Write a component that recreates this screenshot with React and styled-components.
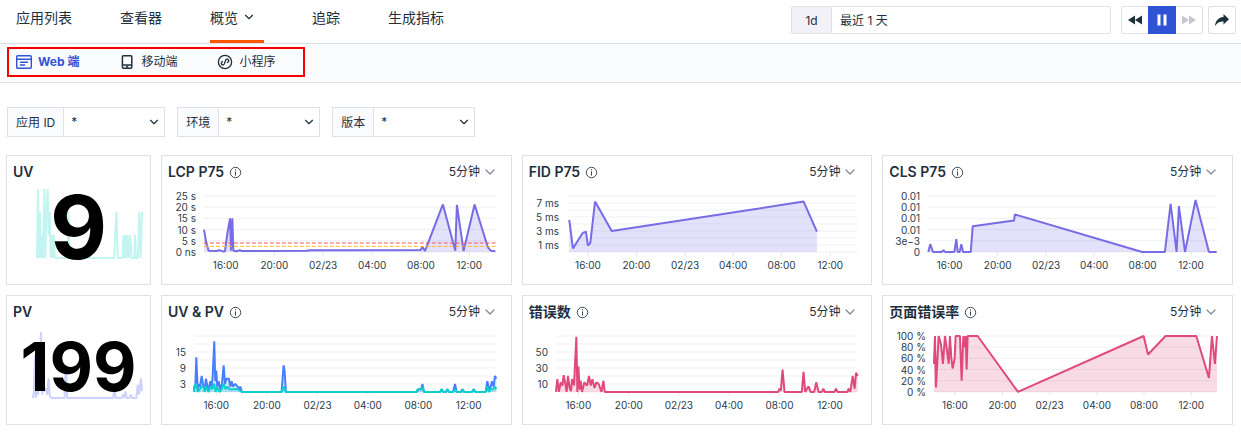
import React from 'react';
import styled, { createGlobalStyle } from 'styled-components';
import { ChevronDown } from 'lucide-react';

const GlobalStyle = createGlobalStyle`
  * {
    box-sizing: border-box;
  }
  body {
    margin: 0;
    background: #fff;
    color: #1f303d;
    font-family: Inter, 'Noto Sans CJK SC', sans-serif;
    font-size: 12px;
  }
  button, input, select {
    font: inherit;
    color: inherit;
  }
`;

const Header = styled.header`
  display: flex;
  justify-content: space-between;
  height: 44px;
  padding: 0 5px 0 16px;
  border-bottom: 1px solid #dfe1e8;
`;

const Nav = styled.nav`
  display: flex;
  gap: 48px;
`;

const NavLink = styled.a`
  display: flex;
  align-items: center;
  gap: 4px;
  padding: 0 ${({ $active }) => ($active ? '8px' : '0')} 6px 0;
  border-bottom: 3px solid ${({ $active }) => ($active ? '#ff5500' : 'transparent')};
  color: inherit;
  font-size: 14px;
  text-decoration: none;
  white-space: nowrap;
`;

const Toolbar = styled.div`
  display: flex;
  padding-top: 6px;
`;

const TimeRange = styled.div`
  display: flex;
  width: 320px;
  height: 28px;
  margin-right: 10px;
  border: 1px solid #dfe1e8;
  border-radius: 2px;
`;

const RangeLabel = styled.label`
  display: flex;
  align-items: center;
  justify-content: center;
  width: 40px;
  background: #f2f1f8;
  border-right: 1px solid #dfe1e8;
`;

const RangeInput = styled.input`
  flex: 1;
  min-width: 0;
  padding: 0 8px 2px;
  border: 0;
  background: none;
`;

const ButtonGroup = styled.div`
  display: flex;
  height: 28px;
  margin-right: 5px;
  border: 1px solid #dfe1e8;
  border-radius: 2px;
`;

const IconButton = styled.button`
  display: flex;
  align-items: center;
  justify-content: center;
  width: ${({ $primary }) => ($primary ? '28px' : '26px')};
  height: ${({ $primary }) => ($primary ? '28px' : '26px')};
  margin: ${({ $primary }) => ($primary ? '-1px 0' : '0')};
  padding: 0;
  border: 0;
  background: ${({ $primary }) => ($primary ? '#3053d5' : 'none')};
  color: ${({ $primary, disabled }) => ($primary ? '#fff' : disabled ? '#c5c7d1' : '#1f303d')};
`;

const ShareButton = styled(IconButton)`
  width: 28px;
  height: 28px;
  border: 1px solid #dfe1e8;
  border-radius: 2px;
`;

const SubHeader = styled.div`
  display: flex;
  height: 39px;
  padding: 3px 7px 5px;
  background: #fafbfd;
  border-bottom: 1px solid #dfe1e8;
`;

const Platforms = styled.nav`
  display: flex;
  align-items: center;
  gap: 40px;
  padding: 0 28px 0 7px;
  border: 2px solid #f80000;
`;

const PlatformLink = styled.a`
  display: flex;
  align-items: center;
  gap: 6px;
  color: ${({ $active }) => ($active ? '#3053d5' : 'inherit')};
  font-weight: ${({ $active }) => ($active ? 700 : 400)};
  line-height: 18px;
  text-decoration: none;
  white-space: nowrap;
`;

const Filters = styled.form`
  display: flex;
  flex-wrap: wrap;
  gap: 12px;
  padding: 24px 7px 18px;
`;

const Filter = styled.label`
  display: flex;
  height: 30px;
  border: 1px solid #dfe1e8;
`;

const FilterName = styled.span`
  display: flex;
  align-items: center;
  padding: 0 8px 2px;
  background: #fafbfd;
  border-right: 1px solid #dfe1e8;
`;

/* The native arrow is hidden and the chevron shares the select's grid cell */
const SelectBox = styled.span`
  display: grid;
  align-items: center;
  width: ${({ $width }) => $width};

  > * {
    grid-area: 1 / 1;
  }
  > svg {
    justify-self: end;
    margin-right: ${({ $inset }) => $inset};
    pointer-events: none;
  }
`;

const Select = styled.select`
  width: 100%;
  height: 28px;
  padding: 0 0 1px ${({ $indent }) => $indent || '0'};
  border: 0;
  background: none;
  appearance: none;
`;

const Board = styled.main`
  display: grid;
  grid-template-columns: 145px repeat(3, minmax(0, 1fr));
  gap: 10px;
  padding: 0 8px 8px 6px;
`;

const Card = styled.section`
  min-height: 130px;
  border: 1px solid #dfe1e8;
`;

const CardHeader = styled.div`
  display: flex;
  align-items: center;
  height: 32px;
  padding: 0 12px 0 6px;

  > svg {
    margin-left: 5px;
  }
  > span {
    margin-left: auto;
  }
`;

const CardTitle = styled.h2`
  margin: 0;
  font-size: 14px;
  font-weight: 600;
  line-height: 20px;
`;

const Plot = styled.svg`
  display: block;
  width: 100%;
  overflow: visible;
`;

const AxisText = styled.text`
  fill: #2b3b48;
  font-size: 10px;
`;

const Stat = styled.div`
  display: grid;
  align-items: start;

  > * {
    grid-area: 1 / 1;
  }
`;

const StatValue = styled.strong`
  height: 78px;
  color: #000;
  font-size: ${({ $size }) => $size};
  font-weight: 700;
  line-height: 78px;
  text-align: center;
`;

const TOP = 8;
const BOTTOM = 64;
const PURPLE = '#776be6';
const PINK = '#e0497b';

const pvPoints = [
  [101, 0], [102, 2], [105, 2], [108, 13], [112, 1], [115, 3], [119, 2], [124, 6], [129, 2], [133, 1], [137, 5],
  [143, 1], [147, 2], [150, 4], [154, 2], [157, 6], [162, 19], [165, 4], [168, 8], [171, 2], [175, 4], [180, 1],
  [185, 3], [190, 10], [194, 3], [198, 5], [206, 5], [210, 2], [214, 4], [218, 2], [225, 3], [232, 2], [236, 1],
  [240, 2], [245, 0], [364, 0], [370, 10], [373, 8], [377, 0], [770, 0], [775, 1], [783, 1], [787, 3], [792, 0],
  [840, 0], [845, 1], [850, 0], [857, 0], [862, 1], [867, 0], [879, 0], [885, 3], [890, 0], [903, 0], [907, 1],
  [912, 0], [936, 0], [941, 1], [946, 0], [977, 0], [982, 4], [987, 1], [992, 2], [996, 4], [1001, 2], [1005, 6],
  [1009, 5],
];

const uvPoints = [
  [101, 0], [102, 2], [108, 3], [112, 0], [118, 1], [124, 2], [130, 2], [133, 0], [137, 2], [145, 0], [150, 2],
  [156, 1], [162, 3], [166, 0], [170, 2], [178, 0], [184, 1], [190, 3], [196, 1], [201, 2], [208, 1], [218, 1],
  [232, 1], [245, 0], [364, 0], [370, 2], [377, 0], [768, 0], [773, 1], [783, 1], [787, 2], [792, 0], [840, 0],
  [845, 1], [850, 0], [857, 0], [862, 1], [867, 0], [879, 0], [885, 1], [890, 0], [903, 0], [907, 1], [912, 0],
  [936, 0], [941, 1], [946, 0], [977, 0], [982, 2], [987, 0], [992, 1], [1000, 1], [1005, 2], [1009, 1],
];

const charts = {
  lcp: {
    title: 'LCP P75',
    domain: [133, 1010],
    left: 42,
    max: 25,
    step: 5,
    labels: [[25, '25 s'], [20, '20 s'], [15, '15 s'], [10, '10 s'], [5, '5 s'], [0, '0 ns']],
    ticks: [198, 344, 490, 637, 783, 928],
    limits: [[4, '#f0586c'], [2.5, '#fbb829']],
    series: [
      {
        color: PURPLE,
        points: [
          [133, 10], [140, 4], [147, 0.6], [172, 0.4], [178, 0.8], [192, 0.2], [196, 0.3], [204, 9], [211, 15],
          [214, 0.6], [218, 15], [221, 0.5], [234, 0.3], [240, 0.8], [246, 0.4], [440, 0.5], [450, 0.7],
          [782, 0.9], [788, 2.2], [795, 0.4], [849, 21.2], [886, 0.5], [891, 21], [911, 0.4], [944, 21.2],
          [984, 2], [993, 0.5], [1006, 0.3],
        ],
      },
    ],
  },
  fid: {
    title: 'FID P75',
    domain: [156, 1027],
    left: 44,
    max: 8,
    step: 1,
    labels: [[7, '7 ms'], [5, '5 ms'], [3, '3 ms'], [1, '1 ms']],
    ticks: [219, 364, 510, 654, 799, 945],
    series: [
      {
        color: PURPLE,
        points: [
          [163, 4.6], [174, 0.5], [203, 2.7], [213, 2.9], [219, 0.9], [226, 1.3], [240, 7.2], [290, 3],
          [865, 7.2], [905, 2.9],
        ],
      },
    ],
  },
  cls: {
    title: 'CLS P75',
    domain: [151, 1019],
    left: 45,
    max: 5,
    step: 1,
    labels: [[5, '0.01'], [4, '0.01'], [3, '0.01'], [2, '0.01'], [1, '3e−3'], [0, '0']],
    ticks: [216, 360, 505, 649, 794, 939],
    series: [
      {
        color: PURPLE,
        points: [
          [152, 0], [158, 0.7], [166, 0], [192, 0], [197, 0.15], [202, 0], [230, 0], [236, 1.15], [240, 0],
          [246, 0], [251, 0.7], [256, 0], [279, 0], [285, 2.3], [409, 2.8], [411, 3.35], [793, 0], [861, 0],
          [878, 4.3], [896, 0], [903, 4.1], [921, 0], [953, 4.65], [993, 0], [1016, 0],
        ],
      },
    ],
  },
  traffic: {
    title: 'UV & PV',
    domain: [101, 1010],
    left: 32,
    max: 21,
    step: 3,
    labels: [[15, '15'], [9, '9'], [3, '3']],
    ticks: [168, 320, 472, 623, 775, 926],
    series: [
      { color: '#467fff', points: pvPoints },
      { color: '#0bcfc9', points: uvPoints },
    ],
  },
  errors: {
    title: '错误数',
    domain: [122, 1025],
    left: 33,
    max: 70,
    step: 10,
    labels: [[50, '50'], [30, '30'], [10, '10']],
    ticks: [189, 340, 490, 640, 791, 942],
    series: [
      {
        color: PINK,
        points: [
          [122, 0], [126, 16], [131, 0], [136, 12], [141, 8], [145, 21], [150, 10], [154, 0], [158, 20], [163, 5],
          [167, 1], [170, 16], [176, 8], [183, 69], [186, 0], [189, 32], [193, 3], [196, 14], [200, 0], [207, 12],
          [215, 8], [221, 20], [226, 8], [231, 16], [237, 5], [243, 12], [250, 10], [258, 0], [264, 14], [268, 0],
          [787, 0], [791, 4], [795, 2], [800, 28], [806, 0], [858, 0], [863, 25], [868, 0], [872, 3], [878, 7],
          [884, 0], [895, 0], [901, 12], [908, 0], [918, 0], [922, 4], [927, 0], [955, 0], [960, 4], [965, 0],
          [994, 0], [998, 4], [1003, 0], [1010, 20], [1016, 4], [1020, 24], [1025, 20],
        ],
      },
    ],
  },
  errorRate: {
    title: '页面错误率',
    domain: [168, 1019],
    left: 51,
    max: 100,
    step: 20,
    labels: [[100, '100 %'], [80, '80 %'], [60, '60 %'], [40, '40 %'], [20, '20 %'], [0, '0 %']],
    ticks: [231, 373, 515, 657, 798, 940],
    series: [
      {
        color: PINK,
        points: [
          [168, 50], [171, 100], [174, 8], [182, 100], [189, 85], [195, 50], [201, 100], [207, 75], [212, 50],
          [216, 100], [220, 60], [224, 42], [230, 60], [233, 100], [246, 100], [251, 20], [256, 100], [260, 80],
          [263, 100], [266, 40], [269, 100], [299, 100], [420, 0], [797, 100], [810, 67], [863, 100], [955, 100],
          [993, 25], [1002, 100], [1011, 50], [1017, 100],
        ],
      },
    ],
  },
};

const uvTrend = [
  [112, 0], [115, 3], [118, 0], [121, 2], [124, 0], [127, 1], [130, 0], [134, 3], [137, 0], [140, 2], [144, 3],
  [147, 1], [150, 2], [153, 0], [156, 1], [159, 0], [162, 1], [165, 0], [203, 0], [206, 2], [209, 0], [342, 0],
  [345, 1], [349, 2], [353, 0], [367, 0], [370, 1], [373, 0], [376, 1], [379, 0], [382, 1], [386, 0], [390, 1],
  [394, 0], [402, 0], [404, 1], [407, 0], [413, 0], [417, 2], [421, 0], [425, 2],
];

const pvTrend = [
  [98, 0], [101, 2], [104, 13], [107, 0], [110, 4], [113, 1], [117, 5], [122, 20], [126, 1], [129, 8], [133, 2],
  [137, 3], [141, 1], [145, 6], [148, 1], [152, 0], [193, 0], [197, 10], [201, 0], [340, 0], [344, 3], [348, 0],
  [366, 0], [369, 1], [373, 0], [377, 2], [381, 0], [389, 0], [393, 1], [397, 0], [410, 0], [414, 4], [418, 1],
  [421, 4], [424, 6], [427, 2],
];

const hours = ['16:00', '20:00', '02/23', '04:00', '08:00', '12:00'];

const scale = (value, [from, to], [start, end]) =>
  start + ((value - from) / (to - from)) * (end - start);

const toPath = (points, x, y) =>
  points.map(([t, v], i) => `${i ? 'L' : 'M'}${x(t).toFixed(1)} ${y(v).toFixed(1)}`).join('');

const Chart = ({ domain, left, max, step, labels, ticks, limits = [], series }) => {
  const right = 335;
  const x = (t) => scale(t, domain, [left, right]);
  const y = (v) => scale(v, [0, max], [BOTTOM, TOP]);
  const lines = Array.from({ length: Math.round(max / step) + 1 }, (_, i) => i * step);

  return (
    <Plot viewBox="0 0 349 96" role="img">
      {lines.map((v) => (
        <line key={v} x1={left} x2={right} y1={y(v)} y2={y(v)} stroke="#f0f1f4" />
      ))}
      {labels.map(([v, text]) => (
        <AxisText key={v} x={left - 8} y={y(v) + 4} textAnchor="end">
          {text}
        </AxisText>
      ))}
      {hours.map((hour, i) => (
        <g key={hour}>
          <line x1={x(ticks[i])} x2={x(ticks[i])} y1={BOTTOM} y2={BOTTOM + 4} stroke="#e6e8ed" />
          <AxisText x={x(ticks[i])} y="81" textAnchor="middle">
            {hour}
          </AxisText>
        </g>
      ))}
      {series.map(({ color, points }) => {
        const path = toPath(points, x, y);
        const first = x(points[0][0]);
        const last = x(points[points.length - 1][0]);
        return (
          <g key={color}>
            <path d={`${path}L${last} ${BOTTOM}L${first} ${BOTTOM}Z`} fill={color} fillOpacity="0.2" />
            <path d={path} fill="none" stroke={color} strokeWidth="2" strokeLinejoin="bevel" />
          </g>
        );
      })}
      {limits.map(([v, color]) => (
        <line key={v} x1={left} x2={right} y1={y(v)} y2={y(v)} stroke={color} strokeDasharray="4 2" />
      ))}
    </Plot>
  );
};

const Trend = ({ points, domain, left, max, color }) => {
  const path = toPath(
    points,
    (t) => scale(t, domain, [left, 135]),
    (v) => scale(v, [0, max], [70, 1]),
  );
  return (
    <Plot viewBox="0 0 143 96" aria-hidden="true">
      <path d={path} fill="none" stroke={color} strokeWidth="2" strokeLinejoin="bevel" />
    </Plot>
  );
};

const InfoIcon = () => (
  <svg width="13" height="13" viewBox="0 0 13 13" fill="none" stroke="#3d4b57">
    <circle cx="6.5" cy="6.5" r="5.2" />
    <path d="M6.5 5.4v4.2M6.5 3.2v1.2" />
  </svg>
);

const ChartCard = ({ chart }) => (
  <Card>
    <CardHeader>
      <CardTitle>{chart.title}</CardTitle>
      <InfoIcon />
      <SelectBox $width="50px" $inset="1px">
        <Select aria-label={`${chart.title} 间隔`}>
          <option>5分钟</option>
        </Select>
        <ChevronDown size={16} strokeWidth={2} color="#868c9e" />
      </SelectBox>
    </CardHeader>
    <Chart {...chart} />
  </Card>
);

const StatCard = ({ title, value, size, ...trend }) => (
  <Card>
    <CardHeader>
      <CardTitle>{title}</CardTitle>
    </CardHeader>
    <Stat>
      <Trend {...trend} />
      <StatValue $size={size}>{value}</StatValue>
    </Stat>
  </Card>
);

const WebIcon = () => (
  <svg width="16" height="16" viewBox="0 0 16 16" fill="none" stroke="currentColor" strokeWidth="1.4">
    <rect x="0.7" y="1.7" width="14.6" height="12.6" rx="1" />
    <path d="M1 5.2h14M4 8.3h8M4 11h5" />
  </svg>
);

const MobileIcon = () => (
  <svg width="16" height="16" viewBox="0 0 16 16" fill="none" stroke="currentColor" strokeWidth="1.5">
    <rect x="3.4" y="1.7" width="9.4" height="12.6" rx="1" />
    <path d="M3.4 11h9.4M7 12.7h2.2" />
  </svg>
);

const MiniProgramIcon = () => (
  <svg width="16" height="16" viewBox="0 0 16 16" fill="none" stroke="currentColor" strokeWidth="1.3">
    <circle cx="8" cy="8" r="6.6" />
    <path d="M5.5 7.7A1.6 1.6 0 1 0 7.3 10L8.7 6A1.6 1.6 0 1 1 10.5 8.3" strokeLinecap="round" />
  </svg>
);

const RewindIcon = () => (
  <svg width="14" height="10" viewBox="0 0 14 10" fill="currentColor">
    <path d="M7 0.5v9L0 5zM14 0.5v9L7 5z" />
  </svg>
);

const ForwardIcon = () => (
  <svg width="14" height="10" viewBox="0 0 14 10" fill="currentColor">
    <path d="M0 0.5v9L7 5zM7 0.5v9L14 5z" />
  </svg>
);

const PauseIcon = () => (
  <svg width="10" height="12" viewBox="0 0 10 12" fill="currentColor">
    <path d="M0.5 0.5h3v11h-3zM6.5 0.5h3v11h-3z" />
  </svg>
);

const ShareIcon = () => (
  <svg width="14" height="12" viewBox="0 0 14 12" fill="currentColor">
    <path d="M8.5 0L14 5.2 8.5 10.4V7.4C5 7.2 2.2 8.6 0 12 .4 7 3.5 3.3 8.5 3z" />
  </svg>
);

const FilterSelect = ({ name }) => (
  <Filter>
    <FilterName>{name}</FilterName>
    <SelectBox $width="100px" $inset="3px">
      <Select $indent="7px">
        <option>*</option>
      </Select>
      <ChevronDown size={14} strokeWidth={2} />
    </SelectBox>
  </Filter>
);

export default () => (
  <>
    <GlobalStyle />
    <Header>
      <Nav>
        <NavLink href="#apps">应用列表</NavLink>
        <NavLink href="#explorer">查看器</NavLink>
        <NavLink href="#overview" $active>
          概览
          <ChevronDown size={14} strokeWidth={2} />
        </NavLink>
        <NavLink href="#tracking">追踪</NavLink>
        <NavLink href="#metrics">生成指标</NavLink>
      </Nav>
      <Toolbar>
        <TimeRange>
          <RangeLabel htmlFor="range">1d</RangeLabel>
          <RangeInput id="range" defaultValue="最近 1 天" />
        </TimeRange>
        <ButtonGroup>
          <IconButton aria-label="后退">
            <RewindIcon />
          </IconButton>
          <IconButton aria-label="暂停" $primary>
            <PauseIcon />
          </IconButton>
          <IconButton aria-label="前进" disabled>
            <ForwardIcon />
          </IconButton>
        </ButtonGroup>
        <ShareButton aria-label="分享">
          <ShareIcon />
        </ShareButton>
      </Toolbar>
    </Header>
    <SubHeader>
      <Platforms>
        <PlatformLink href="#web" $active>
          <WebIcon />
          Web 端
        </PlatformLink>
        <PlatformLink href="#mobile">
          <MobileIcon />
          移动端
        </PlatformLink>
        <PlatformLink href="#mini">
          <MiniProgramIcon />
          小程序
        </PlatformLink>
      </Platforms>
    </SubHeader>
    <Filters>
      <FilterSelect name="应用 ID" />
      <FilterSelect name="环境" />
      <FilterSelect name="版本" />
    </Filters>
    <Board>
      <StatCard title="UV" value="9" size="88px" points={uvTrend} domain={[112, 425]} left={30} max={3} color="#c2f4f1" />
      <ChartCard chart={charts.lcp} />
      <ChartCard chart={charts.fid} />
      <ChartCard chart={charts.cls} />
      <StatCard title="PV" value="199" size="67px" points={pvTrend} domain={[98, 427]} left={26} max={21} color="#ccd2fb" />
      <ChartCard chart={charts.traffic} />
      <ChartCard chart={charts.errors} />
      <ChartCard chart={charts.errorRate} />
    </Board>
  </>
);
